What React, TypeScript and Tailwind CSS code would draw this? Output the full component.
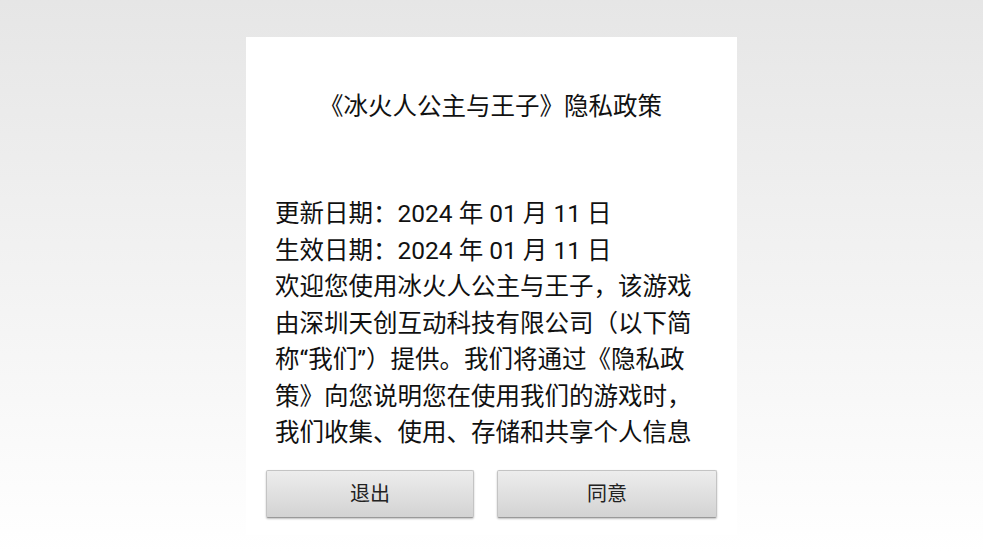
export default function App() {
  return (
    <div
      className="w-[983px] h-[553px] overflow-hidden bg-gradient-to-b from-[#e6e6e6] to-[#ffffff] pt-[37px]"
      style={{ fontFamily: "Roboto, 'Noto Sans CJK SC', sans-serif" }}
    >
      <div className="mx-auto w-[491px] h-[498px] bg-white flex flex-col text-[#111]">
        {/* Title */}
        <h1 className="pt-[52px] text-center text-[24.5px] leading-[36px] font-normal pr-[2px]">
          《冰火人公主与王子》隐私政策
        </h1>

        {/* Scrollable policy text */}
        <div className="mt-[71px] h-[257px] overflow-hidden pl-[29px] pr-[36px]">
          <p className="text-[24.5px] leading-[36.5px]">
            更新日期：2024 年 01 月 11 日
            <br />
            生效日期：2024 年 01 月 11 日
            <br />
            欢迎您使用冰火人公主与王子，该游戏由深圳天创互动科技有限公司（以下简称“我们”）提供。我们将通过《隐私政策》向您说明您在使用我们的游戏时，我们收集、使用、存储和共享个人信息的情况，以及您所享有的相关权利。
          </p>
        </div>

        {/* Buttons */}
        <div className="mt-[17px] flex gap-[23px] px-[20px]">
          <button className="w-[208px] h-[48px] rounded-[2px] border border-[#c4c4c4] border-b-[#9a9a9a] bg-gradient-to-b from-[#ededed] to-[#d3d3d3] shadow-[0_1px_2px_rgba(0,0,0,0.25)] text-[20px] text-[#222]">
            退出
          </button>
          <button className="w-[220px] h-[48px] rounded-[2px] border border-[#c4c4c4] border-b-[#9a9a9a] bg-gradient-to-b from-[#ededed] to-[#d3d3d3] shadow-[0_1px_2px_rgba(0,0,0,0.25)] text-[20px] text-[#222]">
            同意
          </button>
        </div>
      </div>
    </div>
  );
}
